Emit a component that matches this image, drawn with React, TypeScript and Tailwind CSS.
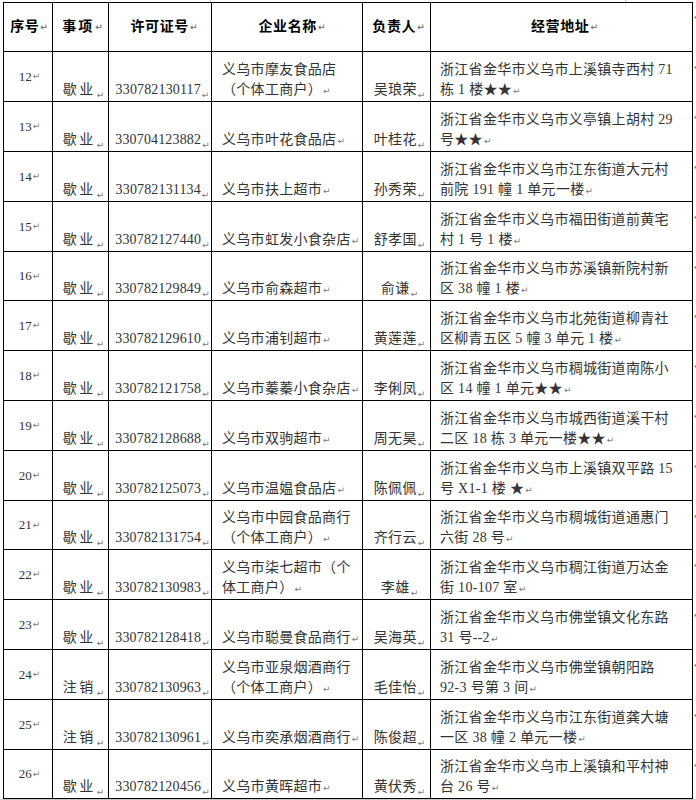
const COLS = "grid grid-cols-[50px_56px_103px_151px_68px_262px_3px]";

type Row = {
  no: string;
  kind: string;
  permit: string;
  name: string[];
  person: string;
  addr: string[];
  h: string;
};

const rows: Row[] = [
  { no: "12", kind: "歇业", permit: "330782130117", name: ["义乌市摩友食品店", "（个体工商户）"], person: "吴琅荣", addr: ["浙江省金华市义乌市上溪镇寺西村 71", "栋 1 楼★★"], h: "h-[50px]" },
  { no: "13", kind: "歇业", permit: "330704123882", name: ["义乌市叶花食品店"], person: "叶桂花", addr: ["浙江省金华市义乌市义亭镇上胡村 29", "号★★"], h: "h-[50px]" },
  { no: "14", kind: "歇业", permit: "330782131134", name: ["义乌市扶上超市"], person: "孙秀荣", addr: ["浙江省金华市义乌市江东街道大元村", "前院 191 幢 1 单元一楼"], h: "h-[50px]" },
  { no: "15", kind: "歇业", permit: "330782127440", name: ["义乌市虹发小食杂店"], person: "舒孝国", addr: ["浙江省金华市义乌市福田街道前黄宅", "村 1 号 1 楼"], h: "h-[50px]" },
  { no: "16", kind: "歇业", permit: "330782129849", name: ["义乌市俞森超市"], person: "俞谦", addr: ["浙江省金华市义乌市苏溪镇新院村新", "区 38 幢 1 楼"], h: "h-[49px]" },
  { no: "17", kind: "歇业", permit: "330782129610", name: ["义乌市浦钊超市"], person: "黄莲莲", addr: ["浙江省金华市义乌市北苑街道柳青社", "区柳青五区 5 幢 3 单元 1 楼"], h: "h-[50px]" },
  { no: "18", kind: "歇业", permit: "330782121758", name: ["义乌市蓁蓁小食杂店"], person: "李俐凤", addr: ["浙江省金华市义乌市稠城街道南陈小", "区 14 幢 1 单元★★"], h: "h-[50px]" },
  { no: "19", kind: "歇业", permit: "330782128688", name: ["义乌市双驹超市"], person: "周无昊", addr: ["浙江省金华市义乌市城西街道溪干村", "二区 18 栋 3 单元一楼★★"], h: "h-[50px]" },
  { no: "20", kind: "歇业", permit: "330782125073", name: ["义乌市温媪食品店"], person: "陈佩佩", addr: ["浙江省金华市义乌市上溪镇双平路 15", "号 X1-1 楼 ★"], h: "h-[50px]" },
  { no: "21", kind: "歇业", permit: "330782131754", name: ["义乌市中园食品商行", "（个体工商户）"], person: "齐行云", addr: ["浙江省金华市义乌市稠城街道通惠门", "六街 28 号"], h: "h-[49px]" },
  { no: "22", kind: "歇业", permit: "330782130983", name: ["义乌市柒七超市（个", "体工商户）"], person: "李雄", addr: ["浙江省金华市义乌市稠江街道万达金", "街 10-107 室"], h: "h-[50px]" },
  { no: "23", kind: "歇业", permit: "330782128418", name: ["义乌市聪曼食品商行"], person: "吴海英", addr: ["浙江省金华市义乌市佛堂镇文化东路", "31 号--2"], h: "h-[50px]" },
  { no: "24", kind: "注销", permit: "330782130963", name: ["义乌市亚泉烟酒商行", "（个体工商户）"], person: "毛佳怡", addr: ["浙江省金华市义乌市佛堂镇朝阳路", "92-3 号第 3 间"], h: "h-[50px]" },
  { no: "25", kind: "注销", permit: "330782130961", name: ["义乌市奕承烟酒商行"], person: "陈俊超", addr: ["浙江省金华市义乌市江东街道龚大塘", "一区 38 幢 2 单元一楼"], h: "h-[50px]" },
  { no: "26", kind: "歇业", permit: "330782120456", name: ["义乌市黄晖超市"], person: "黄伏秀", addr: ["浙江省金华市义乌市上溪镇和平村神", "台 26 号"], h: "h-[49px]" },
];

function Mark() {
  return (
    <span className="ml-[1px] font-['DejaVu_Sans'] text-[9px] leading-none tracking-normal text-[#7a7a7a]">↵</span>
  );
}

function Lines({ lines }: { lines: string[] }) {
  return (
    <div className="flex flex-col">
      {lines.map((l, i) => (
        <div key={i} className="whitespace-nowrap">
          {l}
          {i === lines.length - 1 && <Mark />}
        </div>
      ))}
    </div>
  );
}

export default function App() {
  return (
    <div className="h-[800px] w-[696px] overflow-hidden bg-white font-['Liberation_Serif','Noto_Sans_CJK_SC',serif] text-[14px] leading-[20px] text-[#333]">
      {/* ruler ticks above the table */}
      <div className="flex h-[2px]">
        <div className="ml-[210px] w-px bg-[#c4c4c4]" />
        <div className="ml-[414px] w-px bg-[#c4c4c4]" />
      </div>

      <div className="ml-[3px]">
        {/* header */}
        <div className={`${COLS} h-[50px] font-bold tracking-[0.6px] text-black`}>
          <div className="flex items-center justify-center border border-black pl-[2px]">序号<Mark /></div>
          <div className="flex items-center justify-center border-t border-r border-b border-black pl-[4px] tracking-[2px]">事项<Mark /></div>
          <div className="flex items-center justify-center border-t border-r border-b border-black pl-[8px]">许可证号<Mark /></div>
          <div className="flex items-center justify-center border-t border-r border-b border-black pl-[10px]">企业名称<Mark /></div>
          <div className="flex items-center justify-center border-t border-r border-b border-black pl-[4px]">负责人<Mark /></div>
          <div className="flex items-center justify-center border-t border-r border-b border-black pl-[6px]">经营地址<Mark /></div>
          <div className="overflow-hidden pt-[4px] font-normal"><Mark /></div>
        </div>

        {rows.map((r) => (
          <div key={r.no} className={`${COLS} ${r.h}`}>
            <div className="flex items-center justify-center border-r border-b border-l border-black pl-[3px] text-[13px]">
              {r.no}
              <Mark />
            </div>
            <div className="flex items-end justify-center border-r border-b border-black pb-[1px] pl-[6px] tracking-[2.5px]">
              {r.kind}
              <Mark />
            </div>
            <div className="flex items-end justify-center border-r border-b border-black pb-[1px] pl-[5px] tracking-[0.15px]">
              {r.permit}
              <Mark />
            </div>
            <div className="flex items-end border-r border-b border-black pb-[1px] pl-[10px] tracking-[0.3px]">
              <Lines lines={r.name} />
            </div>
            <div className="flex items-end justify-center border-r border-b border-black pb-[1px] pl-[6px] tracking-[0.4px]">
              {r.person}
              <Mark />
            </div>
            <div className="flex items-end border-r border-b border-black pb-[1px] pl-[9px] tracking-[0.3px]">
              <Lines lines={r.addr} />
            </div>
            <div className="overflow-hidden pt-[4px]"><Mark /></div>
          </div>
        ))}
      </div>
      <div className="h-px bg-[#c8c8c8]" />
    </div>
  );
}
